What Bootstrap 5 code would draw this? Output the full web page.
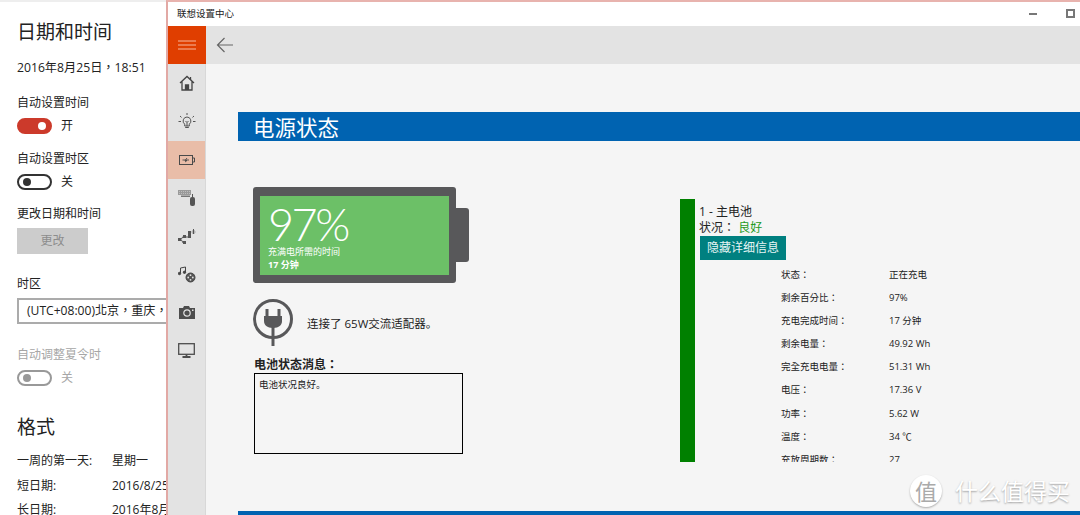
<!DOCTYPE html>
<html lang="zh-CN">
<head>
    <meta charset="UTF-8">
    <meta name="viewport" content="width=device-width, initial-scale=1.0">
    <title>联想设置中心</title>
    <link href="https://cdn.jsdelivr.net/npm/bootstrap@5.3.0/dist/css/bootstrap.min.css" rel="stylesheet">
    <style>
        html, body { height: 515px; overflow: hidden; }
        body { font-family: "Open Sans", "Noto Sans CJK SC", sans-serif; color: #222; background: #fff; position: relative; }
        .shell { height: 515px; }
        /* centred fullwidth punctuation, like the original UI font */
        .tc-punct { font-family: "Open Sans", "Noto Sans CJK TC", sans-serif; }
        /* left settings pane */
        .date-pane { width: 166px; flex: none; padding: 2px 0 0 17px; overflow: hidden; white-space: nowrap; font-size: 12px; line-height: 16px; border-top: 2px solid #eee; }
        .pane-title { font-size: 19px; line-height: 26px; margin: 15px 0 0; font-weight: 400; }
        .pane-date { font-size: 12.2px; margin-top: 15px; }
        .pane-label { margin-top: 19px; }
        .switch-row { margin-top: 7px; height: 16px; gap: 9px; }
        .switch-row + .pane-label { margin-top: 16.5px; }
        .toggle { width: 35px; height: 16px; border-radius: 8px; border: 2px solid #333; position: relative; display: block; }
        .toggle::after { content: ""; position: absolute; width: 8px; height: 8px; border-radius: 50%; background: #333; left: 4px; top: 2px; }
        .toggle.on { background: #cc3a2b; border-color: #cc3a2b; }
        .toggle.on::after { background: #fff; left: auto; right: 4px; }
        .toggle.off { border-color: #999; }
        .toggle.off::after { background: #999; }
        .muted-text { color: #a6a6a6; }
        .change-btn { width: 71px; height: 26px; background: #ccc; color: #8c8c8c; margin-top: 6px; font-size: 12px; }
        .change-btn + .pane-label { margin-top: 21.5px; }
        .zone-box { width: 180px; height: 25.5px; border: 2px solid #ababab; padding-left: 8px; margin-top: 6.5px; line-height: 21px; font-size: 12.1px; }
        .zone-box + .pane-label { margin-top: 23.5px; }
        .switch-row + .fmt-title { margin-top: 27.7px; margin-bottom: 9.2px; }
        .fmt-row { height: 24.7px; line-height: 24.7px; }
        .fmt-key { width: 95px; flex: none; }
        /* lenovo window */
        .app-win { flex: 1; min-width: 0; border-left: 2px solid #e2a9a5; border-top: 2px solid #e8b3ae; background: #f5f5f5; }
        .title-strip { height: 24px; background: #fff; padding-left: 9px; font-size: 9.5px; }
        .win-min { position: absolute; left: 1029px; top: 13px; width: 8px; height: 2px; background: #777; }
        .win-max { position: absolute; left: 1066px; top: 9px; width: 9px; height: 9px; border: 2px solid #777; }
        .tool-strip { height: 38px; background: #e3e3e3; }
        .burger { width: 38px; background: #e03e00; }
        .app-body { height: 451px; }
        .side-nav { width: 37px; flex: none; background: #e3e3e3; border-right: 1px solid #d8d8d8; box-sizing: content-box; }
        .side-item { height: 38.25px; }
        .side-item.active { background: #e9bda8; }
        .main-view { flex: 1; min-width: 0; padding: 48px 0 0 32px; position: relative; overflow: hidden; }
        .power-head { height: 29px; line-height: 32px; background: #0063b1; color: #fff; font-size: 21.5px; padding-left: 15px; }
        .power-grid { margin-top: 46px; padding-left: 15px; }
        .left-col { width: 427px; flex: none; }
        .batt-wrap { height: 96px; }
        .batt-body { width: 203px; height: 96px; background: #58585a; border-radius: 3px; padding: 9px 7px 8px; }
        .batt-fill { height: 79px; background: #6cc067; color: #fff; padding: 8px 0 0 8px; }
        .batt-pct { font-family: "Lato", "Open Sans", sans-serif; font-weight: 300; font-size: 45px; line-height: 40px; letter-spacing: -2.5px; height: 40px; }
        .batt-note { font-size: 9px; line-height: 13px; margin-top: 1px; }
        .batt-nub { width: 13px; height: 54px; background: #58585a; border-radius: 0 3px 3px 0; margin-top: 21px; }
        .adapter-row { margin-top: 15px; height: 48px; gap: 13px; font-size: 11.5px; }
        .adapter-text { padding-top: 3px; }
        .msg-title { font-size: 12px; font-weight: 700; margin: 11px 0 0 1px; line-height: 16px; }
        .msg-box { width: 209px; height: 81px; border: 1px solid #000; margin-left: 1px; padding: 3px 4px; font-size: 9.5px; line-height: 16px; }
        .right-col { height: 263px; margin-top: 12px; overflow: hidden; flex: 1; min-width: 0; font-size: 12px; line-height: 16px; }
        .state-bar { width: 15px; flex: none; background: #008000; }
        .batt-info { padding: 5px 0 0 4px; }
        .good-text { color: #1f9a1f; }
        .detail-btn { width: 86px; height: 24px; background: #008080; color: #e6f5f5; font-size: 12px; margin: 0 0 0 1px; }
        .spec-list { margin: 3px 0 0 82px; font-size: 9.5px; }
        .spec-row { height: 23.1px; line-height: 23.1px; }
        .spec-key { width: 108px; flex: none; }
        .page-foot { position: absolute; left: 32px; right: 0; bottom: 0; height: 4px; background: #0063b1; }
        .stamp { position: absolute; left: 910px; top: 475px; gap: 13px; color: #fff; text-shadow: 0 1px 2px rgba(0,0,0,.35); font-size: 23px; line-height: 32px; pointer-events: none; }
        .stamp-ring { width: 32px; height: 32px; border-radius: 50%; background: #fff; color: #aaa; text-shadow: none; font-size: 22px; box-shadow: 0 1px 2px rgba(0,0,0,.3); }
    </style>
</head>
<body>

    <div class="shell d-flex">
        <div class="date-pane">
            <h2 class="pane-title">日期和时间</h2>
            <div class="pane-date tc-punct" lang="zh-TW">2016年8月25日，18:51</div>
            <div class="pane-label">自动设置时间</div>
            <div class="switch-row d-flex align-items-center"><span class="toggle on"></span><span>开</span></div>
            <div class="pane-label">自动设置时区</div>
            <div class="switch-row d-flex align-items-center"><span class="toggle"></span><span>关</span></div>
            <div class="pane-label">更改日期和时间</div>
            <div class="change-btn d-flex align-items-center justify-content-center">更改</div>
            <div class="pane-label">时区</div>
            <div class="zone-box tc-punct" lang="zh-TW">(UTC+08:00)北京，重庆，香港</div>
            <div class="pane-label muted-text">自动调整夏令时</div>
            <div class="switch-row d-flex align-items-center muted-text"><span class="toggle off"></span><span>关</span></div>
            <h2 class="pane-title fmt-title">格式</h2>
            <div class="d-flex fmt-row"><span class="fmt-key">一周的第一天:</span><span>星期一</span></div>
            <div class="d-flex fmt-row"><span class="fmt-key">短日期:</span><span>2016/8/25</span></div>
            <div class="d-flex fmt-row"><span class="fmt-key">长日期:</span><span>2016年8月25日</span></div>
        </div>

        <div class="app-win d-flex flex-column">
            <div class="title-strip d-flex align-items-center">联想设置中心</div>
            <div class="tool-strip d-flex">
                <div class="burger d-flex align-items-center justify-content-center">
                    <svg width="18" height="10" viewBox="0 0 18 10"><path d="M0 1h18M0 5h18M0 9h18" stroke="#f7b9a0" stroke-width="1"/></svg>
                </div>
                <div class="d-flex align-items-center" style="padding-left:10px">
                    <svg width="18" height="16" viewBox="0 0 18 16" fill="none" stroke="#666" stroke-width="1.2"><path d="M17 8H1.500M8.500 1L1.500 8l7 7"/></svg>
                </div>
            </div>
            <div class="app-body d-flex">
                <div class="side-nav">
                    <div class="side-item d-flex align-items-center justify-content-center">
                        <svg width="16" height="16" viewBox="0 0 16 16" fill="none" stroke="#444" stroke-width="1.300"><path d="M1 8l7-6.500L15 8M3 6.500V15h10V6.500"/><path d="M6.500 15v-5h3v5" fill="#444"/><path d="M11.500 2v3"/></svg>
                    </div>
                    <div class="side-item d-flex align-items-center justify-content-center">
                        <svg width="18" height="18" viewBox="0 0 18 18" fill="none" stroke="#555" stroke-width="1"><path d="M9 5a4 4 0 0 0-2.300 7.200V14h4.600v-1.800A4 4 0 0 0 9 5zM7.200 15.500h3.600M9 1v2M2 4l1.500 1.400M16 4l-1.500 1.400M0.500 9.500h2.500M15 9.500h2.500"/><path d="M7.500 9l1.500 1.500L10.500 9M9 10.500V14"/></svg>
                    </div>
                    <div class="side-item active d-flex align-items-center justify-content-center">
                        <svg width="16" height="10" viewBox="0 0 16 10" fill="none" stroke="#4a4a4a" stroke-width="1"><rect x=".5" y=".5" width="13" height="9"/><path d="M14 3h1.500v4H14"/><path d="M3.500 5H10M8 3L6 5.500h2L6 7" stroke-width=".9"/></svg>
                    </div>
                    <div class="side-item d-flex align-items-center justify-content-center">
                        <svg width="18" height="17" viewBox="0 0 18 17"><rect x="0" y="1" width="13" height="5" fill="#9a9a9a"/><path d="M1 2.500h11M1 4.500h11" stroke="#d5d5d5" stroke-width=".6" stroke-dasharray="1 1"/><rect x="3" y="6.500" width="9" height="1.500" fill="#777"/><rect x="12" y="8" width="5" height="9" rx="2" fill="#555"/><path d="M14.500 5v3" stroke="#555"/></svg>
                    </div>
                    <div class="side-item d-flex align-items-center justify-content-center">
                        <svg width="18" height="17" viewBox="0 0 18 17" fill="#555"><rect x="0" y="10" width="3" height="3"/><rect x="5" y="7" width="3" height="3"/><rect x="5" y="13" width="3" height="3"/><path d="M3 11.500l2-3M3 11.500l2 3h-.5" stroke="#555" fill="none"/><rect x="10" y="3" width="3" height="7"/><path d="M8 9h3" stroke="#555"/><path d="M15.500 1v5" stroke="#555"/><path d="M14.500 2.500c-.5 1-.5 2 0 3M16.500 2.500c.5 1 .5 2 0 3" stroke="#777" fill="none" stroke-width=".7"/></svg>
                    </div>
                    <div class="side-item d-flex align-items-center justify-content-center">
                        <svg width="18" height="17" viewBox="0 0 18 17" fill="none" stroke="#444"><path d="M2.500 7V2l5-1v5"/><circle cx="1.500" cy="7.500" r="1.200" fill="#444"/><circle cx="6.500" cy="6.300" r="1.200" fill="#444"/><circle cx="12.500" cy="11.500" r="4.500" fill="#555"/><circle cx="12.500" cy="9.200" r=".9" fill="#e3e3e3" stroke="none"/><circle cx="12.500" cy="13.800" r=".9" fill="#e3e3e3" stroke="none"/><circle cx="10.200" cy="11.500" r=".9" fill="#e3e3e3" stroke="none"/><circle cx="14.800" cy="11.500" r=".9" fill="#e3e3e3" stroke="none"/></svg>
                    </div>
                    <div class="side-item d-flex align-items-center justify-content-center">
                        <svg width="16" height="13" viewBox="0 0 16 13"><path d="M0 2h4l1-2h5l1 2h5v11H0z" fill="#4d4d4d"/><circle cx="8" cy="7" r="3.200" fill="none" stroke="#e3e3e3" stroke-width="1.200"/><rect x="13" y="3.500" width="1.500" height="1.500" fill="#e3e3e3"/></svg>
                    </div>
                    <div class="side-item d-flex align-items-center justify-content-center">
                        <svg width="17" height="15" viewBox="0 0 17 15" fill="none" stroke="#4d4d4d" stroke-width="1.300"><rect x=".7" y=".7" width="15.600" height="10.600"/><path d="M8.500 11.500v2M4.500 14h8" stroke-width="1.800"/></svg>
                    </div>
                </div>

                <div class="main-view">
                    <div class="power-head">电源状态</div>
                    <div class="power-grid d-flex">
                        <div class="left-col">
                            <div class="batt-wrap d-flex">
                                <div class="batt-body">
                                    <div class="batt-fill">
                                        <div class="batt-pct">97%</div>
                                        <div class="batt-note">充满电所需的时间<br><b>17 分钟</b></div>
                                    </div>
                                </div>
                                <div class="batt-nub"></div>
                            </div>
                            <div class="adapter-row d-flex align-items-center">
                                <svg width="41" height="48" viewBox="0 0 41 48" fill="none" stroke="#58585a"><circle cx="20" cy="21" r="18.500" stroke-width="3"/><path d="M14 11v8M26 11v8" stroke-width="3"/><path d="M11 18h18v5c0 4-3 7-9 7s-9-3-9-7z" fill="#58585a" stroke="none"/><path d="M20 29v19" stroke-width="3"/></svg>
                                <span class="adapter-text">连接了 65W交流适配器。</span>
                            </div>
                            <div class="msg-title tc-punct" lang="zh-TW">电池状态消息：</div>
                            <div class="msg-box">电池状况良好。</div>
                        </div>
                        <div class="right-col d-flex">
                            <div class="state-bar"></div>
                            <div class="batt-info flex-grow-1">
                                <div>1 - 主电池</div>
                                <div class="tc-punct" lang="zh-TW">状况： <span class="good-text">良好</span></div>
                                <div class="detail-btn d-flex align-items-center justify-content-center">隐藏详细信息</div>
                                <div class="spec-list" id="specs"></div>
                            </div>
                        </div>
                    </div>
                    <div class="page-foot"></div>
                </div>
            </div>
        </div>
    </div>

    <span class="win-min"></span>
    <span class="win-max"></span>

    <div class="stamp d-flex align-items-center">
        <span class="stamp-ring d-flex align-items-center justify-content-center">值</span>
        <span>什么值得买</span>
    </div>

    <script>
        const specs = [
            ["状态：", "正在充电"],
            ["剩余百分比：", "97%"],
            ["充电完成时间：", "17 分钟"],
            ["剩余电量：", "49.92 Wh"],
            ["完全充电电量：", "51.31 Wh"],
            ["电压：", "17.36 V"],
            ["功率：", "5.62 W"],
            ["温度：", "34 ℃"],
            ["充放周期数：", "27"]
        ];
        let html = "";
        specs.forEach(s => {
            html += `<div class="spec-row d-flex"><span class="spec-key tc-punct" lang="zh-TW">${s[0]}</span><span>${s[1]}</span></div>`;
        });
        document.getElementById("specs").innerHTML = html;
    </script>
    <script src="https://cdn.jsdelivr.net/npm/bootstrap@5.3.0/dist/js/bootstrap.bundle.min.js"></script>
</body>
</html>
